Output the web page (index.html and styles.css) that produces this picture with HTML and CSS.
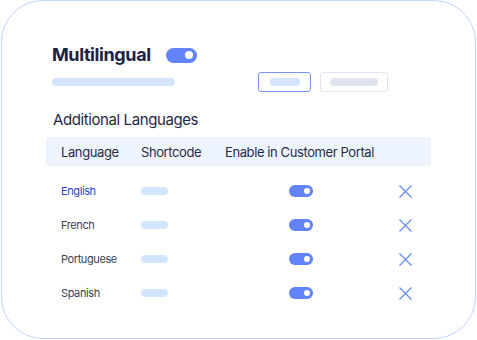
FILE: index.html
```html
<!DOCTYPE html>
<html lang="en">
<head>
  <meta charset="UTF-8">
  <title>Multilingual settings</title>
  <link rel="stylesheet" href="styles.css">
</head>
<body>
  <div class="card">
    <div class="title-row">
      <h1 class="title">Multilingual</h1>
      <span class="toggle big"></span>
    </div>
    <div class="sub-row">
      <span class="bar"></span>
      <div class="buttons">
        <span class="btn active"><span class="pill"></span></span>
        <span class="btn"><span class="pill gray"></span></span>
      </div>
    </div>
    <h2 class="section">Additional Languages</h2>
    <div class="table">
      <div class="thead">
        <span>Language</span>
        <span>Shortcode</span>
        <span>Enable in Customer Portal</span>
      </div>
      <div class="tbody">
        <div class="row">
          <span class="lang current">English</span>
          <span><span class="code"></span></span>
          <span class="cell-toggle"><span class="toggle"></span></span>
          <span class="remove"><svg width="13" height="13" viewBox="0 0 13 13"><path d="M0.5 0.5L12.5 12.5M12.5 0.5L0.5 12.5" stroke="#6b8cf7" stroke-width="1.3"/></svg></span>
        </div>
        <div class="row">
          <span class="lang">French</span>
          <span><span class="code"></span></span>
          <span class="cell-toggle"><span class="toggle"></span></span>
          <span class="remove"><svg width="13" height="13" viewBox="0 0 13 13"><path d="M0.5 0.5L12.5 12.5M12.5 0.5L0.5 12.5" stroke="#6b8cf7" stroke-width="1.3"/></svg></span>
        </div>
        <div class="row">
          <span class="lang">Portuguese</span>
          <span><span class="code"></span></span>
          <span class="cell-toggle"><span class="toggle"></span></span>
          <span class="remove"><svg width="13" height="13" viewBox="0 0 13 13"><path d="M0.5 0.5L12.5 12.5M12.5 0.5L0.5 12.5" stroke="#6b8cf7" stroke-width="1.3"/></svg></span>
        </div>
        <div class="row">
          <span class="lang">Spanish</span>
          <span><span class="code"></span></span>
          <span class="cell-toggle"><span class="toggle"></span></span>
          <span class="remove"><svg width="13" height="13" viewBox="0 0 13 13"><path d="M0.5 0.5L12.5 12.5M12.5 0.5L0.5 12.5" stroke="#6b8cf7" stroke-width="1.3"/></svg></span>
        </div>
      </div>
    </div>
  </div>
</body>
</html>
```

FILE: styles.css
```css
body{
  margin:0;
  padding:0 0 0 1px;
  background:#fff;
  font-family:Inter, "Noto Sans", sans-serif;
  color:#1c2343;
  letter-spacing:-0.025em;
}
.card{
  box-sizing:border-box;
  width:475px;
  height:339px;
  border:1px solid #c3d4fb;
  border-radius:42px;
  padding:46px 0 0 44px;
}
.title-row{
  display:flex;
  align-items:center;
  gap:15px;
  padding-left:6px;
  height:16px;
}
.title{
  margin:0;
  font-size:18px;
  font-weight:700;
  line-height:16px;
  color:#1b2242;
}
.toggle{
  position:relative;
  display:inline-block;
  width:24px;
  height:12px;
  border-radius:6px;
  background:#6283fc;
}
.toggle:after{
  content:'';
  position:absolute;
  right:3px;
  top:3px;
  width:6px;
  height:6px;
  border-radius:50%;
  background:#fff;
}
.toggle.big{
  width:31px;
  height:15px;
  border-radius:8px;
}
.toggle.big:after{
  right:4px;
  top:3.5px;
  width:8px;
  height:8px;
}
.sub-row{
  display:flex;
  align-items:center;
  margin-top:9px;
  padding-left:6px;
}
.bar{
  width:123px;
  height:8px;
  border-radius:4px;
  background:#d4e4fd;
}
.buttons{
  display:flex;
  gap:9px;
  margin-left:83px;
}
.btn{
  box-sizing:border-box;
  display:flex;
  align-items:center;
  justify-content:center;
  width:53px;
  height:20px;
  border:1px solid #e2e4f2;
  border-radius:3px;
}
.btn + .btn{
  width:68px;
}
.btn.active{
  border-color:#7692f8;
}
.pill{
  width:30px;
  height:8px;
  border-radius:4px;
  background:#d3e4fd;
}
.pill.gray{
  width:48px;
  background:#dfe3ef;
}
.section{
  margin:18px 0 0 7px;
  font-size:15px;
  font-weight:400;
  line-height:20px;
  color:#1f2645;
}
.table{
  margin-top:7px;
  width:385px;
}
.thead{
  display:grid;
  grid-template-columns:80px 84px auto;
  align-items:center;
  height:29px;
  padding-left:15px;
  background:#eef4fe;
  border-radius:3px;
  font-size:13px;
  color:#262c47;
}
.tbody{
  padding-top:8px;
}
.row{
  display:grid;
  grid-template-columns:80px 84px 174px auto;
  align-items:center;
  height:34px;
  padding-left:15px;
  font-size:11px;
  color:#3a3f57;
}
.row > span{
  display:flex;
  align-items:center;
}
.lang.current{
  color:#2e3fc4;
}
.code{
  width:27px;
  height:8px;
  border-radius:4px;
  background:#d3e4fd;
}
.cell-toggle{
  padding-left:64px;
}
.remove svg{
  display:block;
}
```
